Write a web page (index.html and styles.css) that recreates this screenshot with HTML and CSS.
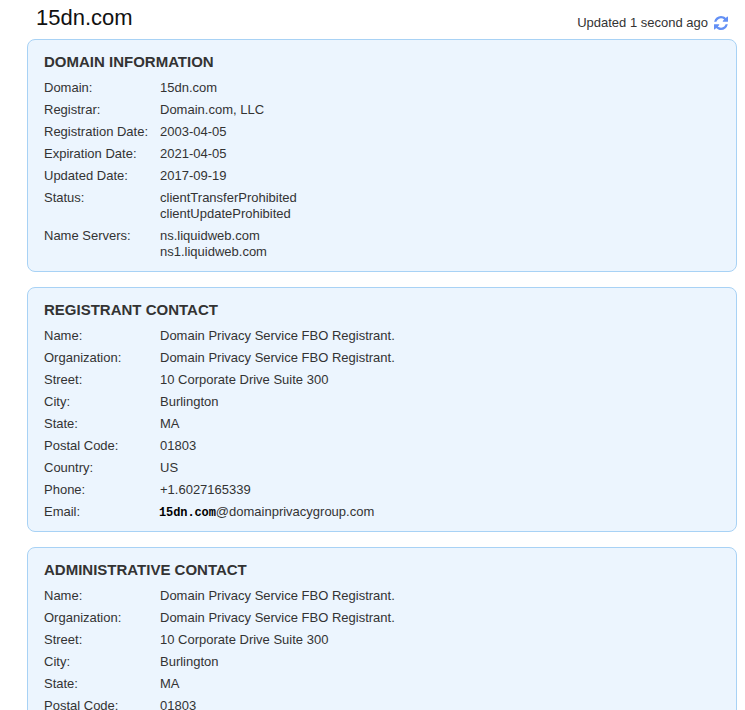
FILE: index.html
```html
<!DOCTYPE html>
<html lang="en">
<head>
    <meta charset="UTF-8">
    <meta name="viewport" content="width=device-width, initial-scale=1.0">
    <title>15dn.com</title>
    <link rel="stylesheet" href="styles.css">
</head>
<body>
    <header class="top">
        <h1>15dn.com</h1>
        <div class="updated">
            <span>Updated 1 second ago</span>
            <svg class="refresh" viewBox="0 0 1536 1536" width="14" height="14">
                <path d="M1511 928q0 5-1 7-64 268-268 434.500T764 1536q-146 0-282.500-55T238 1324l-129 129q-19 19-45 19t-45-19-19-45V960q0-26 19-45t45-19h448q26 0 45 19t19 45-19 45l-137 137q71 66 161 102t187 36q134 0 250-65t186-179q11-17 53-117 8-23 30-23h192q13 0 22.500 9.500t9.500 22.500zM1536 128v448q0 26-19 45t-45 19h-448q-26 0-45-19t-19-45 19-45l138-138q-148-137-349-137-134 0-250 65T332 500q-11 17-53 117-8 23-30 23H50q-13 0-22.500-9.500T18 608v-7q65-268 270-434.500T768 0q146 0 284 55.500T1297 212l130-129q19-19 45-19t45 19 19 45z"/>
            </svg>
        </div>
    </header>

    <section class="card">
        <h2>DOMAIN INFORMATION</h2>
        <div class="row"><div class="label">Domain:</div><div>15dn.com</div></div>
        <div class="row"><div class="label">Registrar:</div><div>Domain.com, LLC</div></div>
        <div class="row"><div class="label">Registration Date:</div><div>2003-04-05</div></div>
        <div class="row"><div class="label">Expiration Date:</div><div>2021-04-05</div></div>
        <div class="row"><div class="label">Updated Date:</div><div>2017-09-19</div></div>
        <div class="row"><div class="label">Status:</div><div>clientTransferProhibited<br>clientUpdateProhibited</div></div>
        <div class="row"><div class="label">Name Servers:</div><div>ns.liquidweb.com<br>ns1.liquidweb.com</div></div>
    </section>

    <section class="card">
        <h2>REGISTRANT CONTACT</h2>
        <div class="row"><div class="label">Name:</div><div>Domain Privacy Service FBO Registrant.</div></div>
        <div class="row"><div class="label">Organization:</div><div>Domain Privacy Service FBO Registrant.</div></div>
        <div class="row"><div class="label">Street:</div><div>10 Corporate Drive Suite 300</div></div>
        <div class="row"><div class="label">City:</div><div>Burlington</div></div>
        <div class="row"><div class="label">State:</div><div>MA</div></div>
        <div class="row"><div class="label">Postal Code:</div><div>01803</div></div>
        <div class="row"><div class="label">Country:</div><div>US</div></div>
        <div class="row"><div class="label">Phone:</div><div>+1.6027165339</div></div>
        <div class="row"><div class="label">Email:</div><div><span class="mail-name">15dn.com</span>@domainprivacygroup.com</div></div>
    </section>

    <section class="card">
        <h2>ADMINISTRATIVE CONTACT</h2>
        <div class="row"><div class="label">Name:</div><div>Domain Privacy Service FBO Registrant.</div></div>
        <div class="row"><div class="label">Organization:</div><div>Domain Privacy Service FBO Registrant.</div></div>
        <div class="row"><div class="label">Street:</div><div>10 Corporate Drive Suite 300</div></div>
        <div class="row"><div class="label">City:</div><div>Burlington</div></div>
        <div class="row"><div class="label">State:</div><div>MA</div></div>
        <div class="row"><div class="label">Postal Code:</div><div>01803</div></div>
    </section>
</body>
</html>
```

FILE: styles.css
```css
html, body {
    height: 710px;
    overflow: hidden;
}

body {
    font-family: "Liberation Sans", Arial, sans-serif;
    font-size: 13px;
    line-height: 16px;
    margin: 0;
    padding: 0 8px 0 27px;
    background-color: #fff;
    color: #333;
}

.top {
    display: flex;
    justify-content: space-between;
    align-items: flex-end;
    height: 39px;
    padding: 0 9px 0 9px;
}

.top h1 {
    margin: 0;
    font-size: 22px;
    font-weight: normal;
    line-height: 26px;
    color: #111;
    align-self: flex-start;
    margin-top: 5px;
}

.updated {
    display: flex;
    align-items: center;
    gap: 6px;
    padding-bottom: 8px;
}

.refresh {
    fill: #6390f5;
}

.card {
    background-color: #ecf5fe;
    border: 1px solid #a8d2f5;
    border-radius: 8px;
    padding: 13px 16px 5px;
    margin-bottom: 15px;
}

.card h2 {
    margin: 0 0 9px;
    font-size: 15px;
    line-height: 18px;
    font-weight: bold;
}

.row {
    display: flex;
    margin-bottom: 6px;
}

.label {
    width: 116px;
    flex-shrink: 0;
}

.mail-name {
    font-family: "Liberation Mono", monospace;
    font-size: 12px;
    line-height: 12px;
    font-weight: bold;
    color: #000;
    letter-spacing: -0.1px;
    margin-left: -1px;
}
```
